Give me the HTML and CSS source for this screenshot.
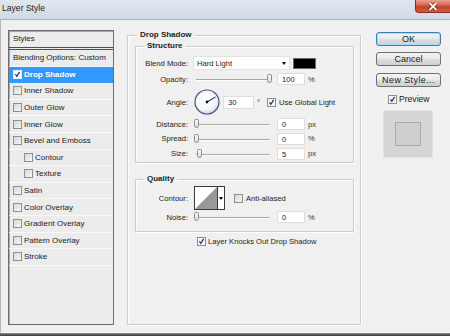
FILE: index.html
```html
<!DOCTYPE html>
<html lang="en">
<head>
  <meta charset="UTF-8" />
  <title>Layer Style</title>
  <link rel="stylesheet" href="styles.css">
</head>
<body>
  <div class="window">
    <div class="titlebar">
      <span class="title">Layer Style</span>
      <div class="close-btn">
        <svg width="12" height="9" viewBox="0 0 12 9">
          <path d="M2.5 1 L9.5 8 M9.5 1 L2.5 8" stroke="#6a2214" stroke-width="3.2" />
          <path d="M2.5 1 L9.5 8 M9.5 1 L2.5 8" stroke="#fff" stroke-width="1.8" />
        </svg>
      </div>
    </div>

    <div class="dialog">
      <!-- left: effects list -->
      <div class="styles-list">
        <div class="list-head">Styles</div>
        <div class="list-row">Blending Options: Custom</div>
        <div class="list-row selected">
          <span class="check on"><svg viewBox="0 0 9 9"><path d="M1.8 4.2 L3.6 6.8 L7.2 1.2" /></svg></span>Drop Shadow
        </div>
        <div class="list-row"><span class="check"></span>Inner Shadow</div>
        <div class="list-row"><span class="check"></span>Outer Glow</div>
        <div class="list-row"><span class="check"></span>Inner Glow</div>
        <div class="list-row"><span class="check"></span>Bevel and Emboss</div>
        <div class="list-row sub"><span class="check"></span>Contour</div>
        <div class="list-row sub"><span class="check"></span>Texture</div>
        <div class="list-row"><span class="check"></span>Satin</div>
        <div class="list-row"><span class="check"></span>Color Overlay</div>
        <div class="list-row"><span class="check"></span>Gradient Overlay</div>
        <div class="list-row"><span class="check"></span>Pattern Overlay</div>
        <div class="list-row"><span class="check"></span>Stroke</div>
      </div>

      <!-- middle: drop shadow settings -->
      <fieldset class="group outer-group">
        <legend>Drop Shadow</legend>

        <fieldset class="group inner-group">
          <legend>Structure</legend>

          <div class="row row-blend">
            <span class="label">Blend Mode:</span>
            <div class="select"><span>Hard Light</span><span class="arrow"></span></div>
            <span class="swatch"></span>
          </div>

          <div class="row row-16">
            <span class="label">Opacity:</span>
            <div class="slider"><span class="thumb" style="left:73px"></span></div>
            <span class="field">100</span>
            <span class="unit">%</span>
          </div>

          <div class="row row-angle">
            <span class="label">Angle:</span>
            <svg class="dial" width="26" height="26" viewBox="0 0 26 26">
              <defs>
                <radialGradient id="dialFill" cx="45%" cy="40%" r="60%">
                  <stop offset="0" stop-color="#ffffff" />
                  <stop offset="0.7" stop-color="#f4f6fa" />
                  <stop offset="1" stop-color="#c9d3e3" />
                </radialGradient>
              </defs>
              <circle cx="13" cy="13" r="12" fill="url(#dialFill)" stroke="#46557e" stroke-width="1.2" />
              <line x1="13" y1="13" x2="21.5" y2="8" stroke="#111" stroke-width="1" />
              <circle cx="13" cy="13" r="1.4" fill="#111" />
            </svg>
            <span class="field field-angle">30</span>
            <span class="unit">°</span>
            <span class="check on global"><svg viewBox="0 0 9 9"><path d="M1.8 4.2 L3.6 6.8 L7.2 1.2" /></svg></span>
            <span class="check-text">Use Global Light</span>
          </div>

          <div class="row row-14">
            <span class="label">Distance:</span>
            <div class="slider"><span class="thumb" style="left:0px"></span></div>
            <span class="field">0</span>
            <span class="unit">px</span>
          </div>

          <div class="row row-15">
            <span class="label">Spread:</span>
            <div class="slider"><span class="thumb" style="left:0px"></span></div>
            <span class="field">0</span>
            <span class="unit">%</span>
          </div>

          <div class="row row-15">
            <span class="label">Size:</span>
            <div class="slider"><span class="thumb" style="left:3px"></span></div>
            <span class="field">5</span>
            <span class="unit">px</span>
          </div>
        </fieldset>

        <fieldset class="group inner-group quality">
          <legend>Quality</legend>

          <div class="row row-contour">
            <span class="label">Contour:</span>
            <div class="contour">
              <svg width="22" height="22" viewBox="0 0 22 22">
                <rect width="22" height="22" fill="#fff" />
                <polygon points="0,22 22,0 22,22" fill="#999" />
              </svg>
              <span class="contour-drop"><span class="arrow"></span></span>
            </div>
            <span class="check aa"></span>
            <span class="check-text">Anti-aliased</span>
          </div>

          <div class="row row-14">
            <span class="label">Noise:</span>
            <div class="slider"><span class="thumb" style="left:0px"></span></div>
            <span class="field">0</span>
            <span class="unit">%</span>
          </div>
        </fieldset>

        <div class="row knocks">
          <span class="check on"><svg viewBox="0 0 9 9"><path d="M1.8 4.2 L3.6 6.8 L7.2 1.2" /></svg></span>
          <span class="check-text">Layer Knocks Out Drop Shadow</span>
        </div>
      </fieldset>

      <!-- right: buttons and preview -->
      <div class="side">
        <div class="btn default">OK</div>
        <div class="btn">Cancel</div>
        <div class="btn new-style">New Style...</div>
        <div class="preview-row">
          <span class="check on"><svg viewBox="0 0 9 9"><path d="M1.8 4.2 L3.6 6.8 L7.2 1.2" /></svg></span>
          <span class="check-text">Preview</span>
        </div>
        <div class="preview-box"><div class="preview-inner"></div></div>
      </div>
    </div>

    <div class="window-bottom"></div>
  </div>
</body>
</html>
```

FILE: styles.css
```css
html, body {
  margin: 0;
  padding: 0;
}

body {
  width: 450px;
  height: 336px;
  overflow: hidden;
  font-family: "Liberation Sans", Arial, sans-serif;
  color: #1b1b1b;
  background-color: #f0f0f0;
}

.window {
  width: 450px;
  height: 336px;
  display: flex;
  flex-direction: column;
  background-color: #f0f0f0;
}

/* Title bar */
.titlebar {
  height: 19px;
  flex: none;
  display: flex;
  align-items: flex-start;
  border-bottom: 1px solid #aab4c0;
  background: linear-gradient(#e0e7ef, #d0dae5);
}

.title {
  font-size: 8.6px;
  line-height: 17px;
  padding-left: 2px;
  color: #1e1e1e;
}

.close-btn {
  margin-left: auto;
  width: 34px;
  height: 12px;
  display: flex;
  align-items: center;
  justify-content: center;
  border: 1px solid #8d2e1d;
  border-top: none;
  border-right: none;
  border-radius: 0 0 0 4px;
  background: linear-gradient(#eaa493, #d5604a 45%, #c0442b 55%, #cf5a3e);
}

/* Dialog body */
.dialog {
  flex: 1;
  display: flex;
  align-items: flex-start;
  padding: 10px 0 0 7px;
  border-left: 1px solid #b6b6b6;
  border-bottom: 1px solid #fafafa;
}

.window-bottom {
  height: 3px;
  flex: none;
  background: linear-gradient(#8a8a8a, #3a3a3a);
}

/* Checkboxes */
.check {
  width: 9px;
  height: 9px;
  flex: none;
  box-sizing: border-box;
  border: 1px solid #8e8f8f;
  background: linear-gradient(135deg, #d8d8d8, #f6f6f6);
  display: inline-flex;
}

.check.on {
  background: #f4f6f8;
}

.check svg {
  width: 7px;
  height: 7px;
}

.check svg path {
  fill: none;
  stroke: #23367a;
  stroke-width: 1.6;
}

/* Styles list */
.styles-list {
  width: 106px;
  height: 295px;
  flex: none;
  box-sizing: border-box;
  border: 1px solid #6c6c6c;
  box-shadow: inset 1px 1px 0 #a9a9a9;
  background-color: #ececec;
  font-size: 8px;
}

.list-head {
  height: 16px;
  line-height: 16px;
  padding-left: 4px;
  border-bottom: 3px double #4f4f4f;
}

.list-row {
  height: 16.6px;
  box-sizing: border-box;
  display: flex;
  align-items: center;
  gap: 2px;
  padding-left: 4px;
  white-space: nowrap;
  border-bottom: 1px solid #f8f8f8;
}

.list-row.sub {
  padding-left: 15px;
}

.list-row.selected {
  background-color: #3399ff;
  border-bottom-color: #3399ff;
  color: #fff;
  font-weight: bold;
}

.list-row.selected .check {
  border-color: #e6eef8;
  background: #fff;
}

/* Group boxes */
.group {
  margin: 0;
  min-width: 0;
  border: 1px solid #cdcdcd;
  box-shadow: 1px 1px 0 #fdfdfd, inset 1px 1px 0 #fdfdfd;
}

legend {
  padding: 0 3px;
  margin-left: 2px;
  font-size: 8px;
  font-weight: bold;
  line-height: 10px;
}

.outer-group {
  width: 234px;
  height: 295px;
  box-sizing: border-box;
  margin-left: 13px;
  padding: 0 6px 0 7px;
}

.inner-group {
  margin-top: 1px;
  padding: 4px 0 1px 6px;
}

.inner-group.quality {
  margin-top: 11px;
  padding: 2px 0 7px 6px;
}

/* Setting rows */
.row {
  display: flex;
  align-items: center;
  font-size: 7.6px;
  white-space: nowrap;
}

.row-blend,
.row-16 { height: 16px; }
.row-angle { height: 30px; }
.row-14 { height: 14px; }
.row-15 { height: 15px; }
.row-contour { height: 24px; }

.label {
  width: 46px;
  flex: none;
  text-align: right;
}

.select {
  width: 97px;
  height: 14px;
  margin-left: 5px;
  box-sizing: border-box;
  display: flex;
  align-items: center;
  justify-content: space-between;
  padding: 0 3px 0 3px;
  border: 1px solid #e2e2e2;
  background-color: #fff;
}

.arrow {
  width: 0;
  height: 0;
  border-left: 2.5px solid transparent;
  border-right: 2.5px solid transparent;
  border-top: 3px solid #000;
}

.swatch {
  width: 23px;
  height: 11px;
  margin-left: 3px;
  box-sizing: border-box;
  border: 1px solid #6a6a6a;
  background-color: #000;
}

.slider {
  position: relative;
  width: 79px;
  height: 10px;
  margin-left: 6px;
  flex: none;
}

.slider::before {
  content: "";
  position: absolute;
  left: 2px;
  right: 3px;
  top: 5px;
  height: 1px;
  background-color: #a8a8a8;
  box-shadow: 0 1px 0 #fff;
}

.thumb {
  position: absolute;
  top: 0;
  width: 5px;
  height: 9px;
  box-sizing: border-box;
  border: 1px solid #8a8a8a;
  border-radius: 2px 2px 3px 3px;
  background: linear-gradient(#fafafa, #dcdcdc);
}

.field {
  width: 28px;
  height: 12px;
  margin-left: 4px;
  box-sizing: border-box;
  padding-left: 4px;
  line-height: 11px;
  border: 1px solid #dedede;
  background-color: #fff;
  flex: none;
}

.field-angle {
  width: 31px;
  height: 13px;
  margin-left: 3px;
  line-height: 12px;
}

.unit {
  margin-left: 3px;
  color: #333;
}

.dial {
  margin-left: 6px;
  flex: none;
}

.check.global {
  margin-left: 7px;
}

.check-text {
  margin-left: 3px;
}

.contour {
  width: 31px;
  height: 24px;
  margin-left: 6px;
  box-sizing: border-box;
  display: flex;
  border: 1px solid #3a3a3a;
  flex: none;
}

.contour-drop {
  flex: 1;
  display: flex;
  align-items: center;
  justify-content: center;
  border-left: 1px solid #3a3a3a;
  background-color: #fff;
}

.check.aa {
  margin-left: 9px;
}

.knocks {
  height: 12px;
  margin-top: 3px;
  padding-left: 62px;
}

.knocks .check-text {
  margin-left: 2px;
}

/* Right side buttons */
.side {
  width: 65px;
  margin-left: 15px;
  padding-top: 2px;
  display: flex;
  flex-direction: column;
  flex: none;
}

.btn {
  height: 14px;
  box-sizing: border-box;
  border: 1px solid #707070;
  border-radius: 3px;
  background: linear-gradient(#f3f3f3, #ebebeb 45%, #dddddd 55%, #cfcfcf);
  font-size: 9px;
  line-height: 12px;
  text-align: center;
}

.btn.default {
  border-color: #3c7fb1;
  box-shadow: inset 0 0 0 1px #a8dcf2;
}

.btn + .btn {
  margin-top: 6px;
}

.btn.new-style {
  margin-top: 7px;
  letter-spacing: 0.4px;
}

.preview-row {
  height: 12px;
  margin-top: 6px;
  padding-left: 12px;
  display: flex;
  align-items: center;
  font-size: 8.6px;
}

.preview-row .check-text {
  margin-left: 2px;
}

.preview-box {
  width: 50px;
  height: 48px;
  margin: 5px 0 0 7px;
  box-sizing: border-box;
  padding: 11px 0 0 11px;
  border: 1px solid #e2e2e2;
  background-color: #d6d6d6;
}

.preview-inner {
  width: 26px;
  height: 24px;
  box-sizing: border-box;
  border: 1px solid #a9a9a9;
  background-color: #cfcfcf;
}
```
